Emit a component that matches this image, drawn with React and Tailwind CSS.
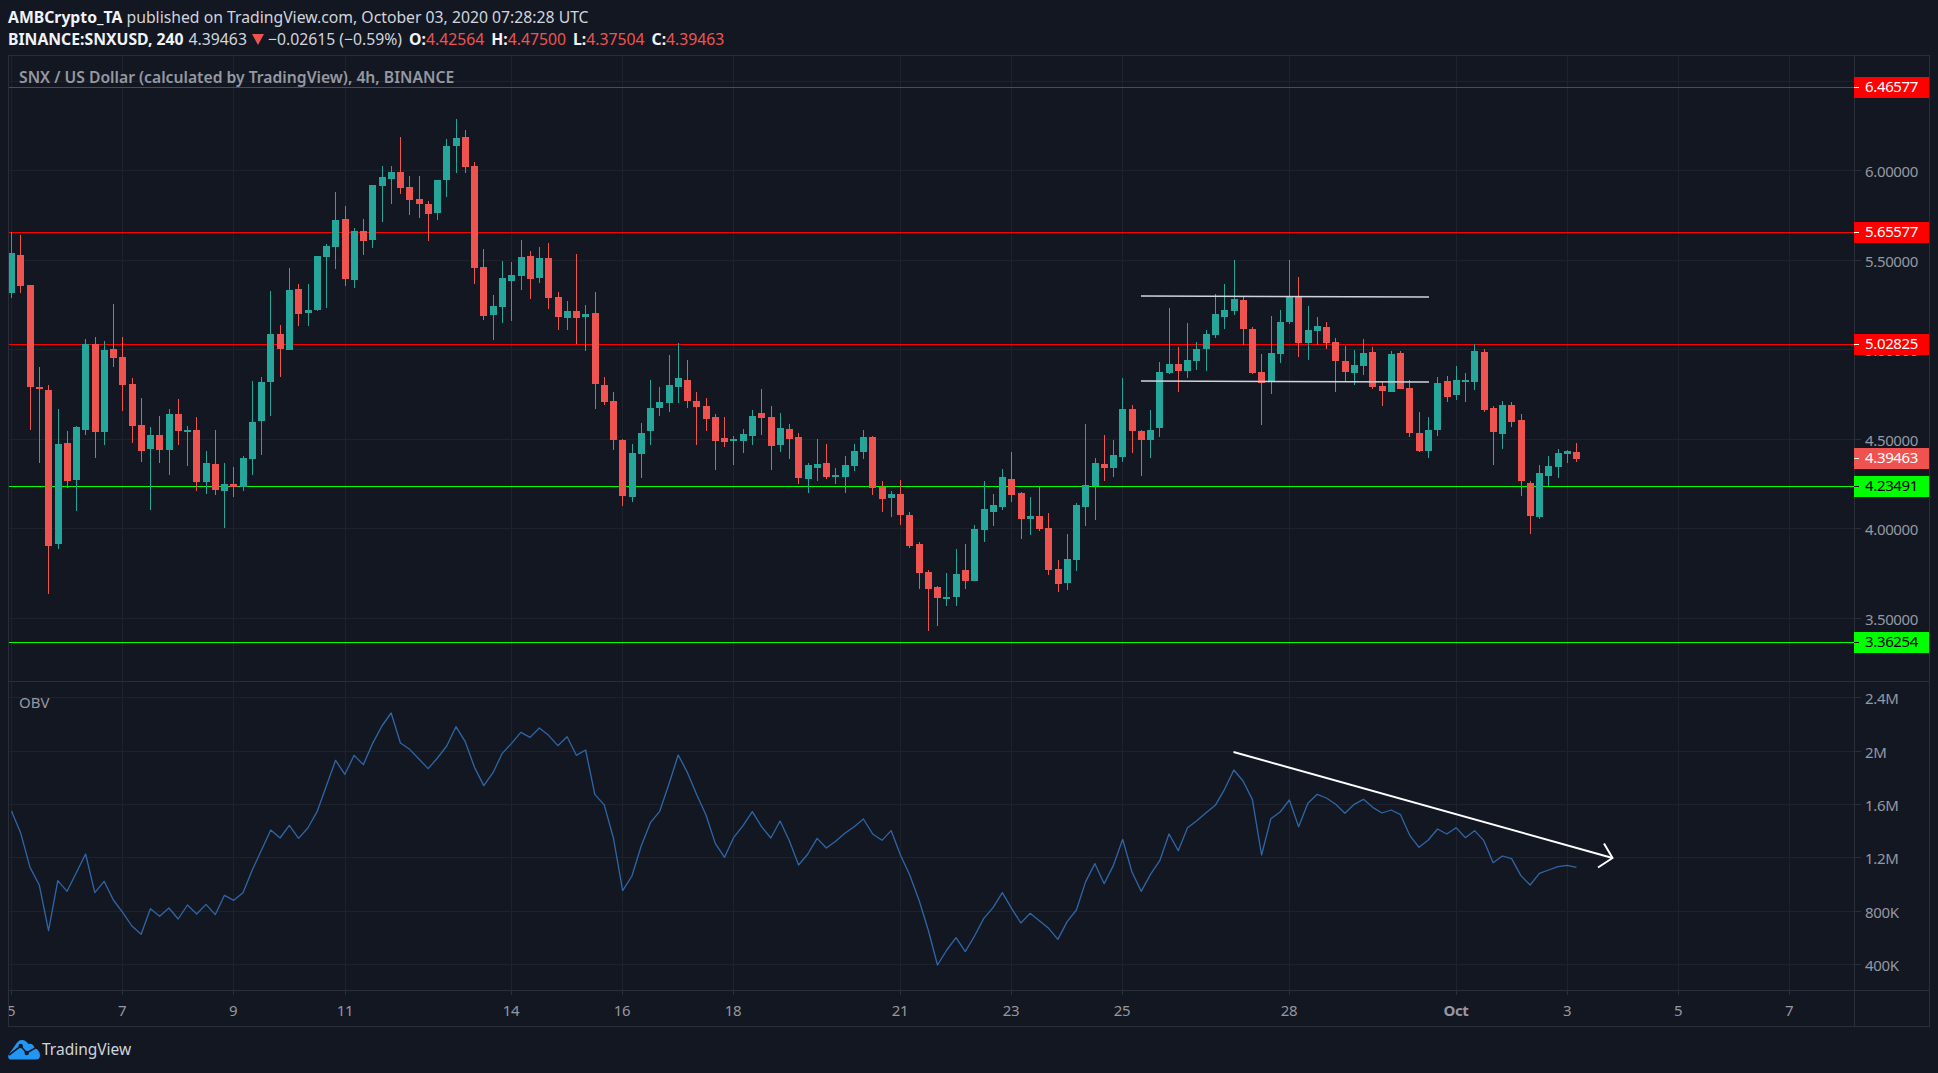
import React from "react";

const C = [
[232,253,293,298,1],[235,255,286,293,0],[285,285,387,430,0],[367,387,389,463,0],[385,390,546,594,0],[409,444,544,549,1],[431,443,481,488,0],[426,427,480,511,1],[339,344,430,435,1],[337,344,432,458,0],
[341,350,432,445,1],[304,349,358,367,0],[337,357,385,411,0],[378,384,426,443,0],[398,425,451,462,0],[427,435,449,510,1],[416,435,450,463,0],[409,414,450,475,1],[399,414,431,445,0],[426,430,432,466,1],
[417,430,482,491,0],[451,463,482,494,1],[430,464,490,495,0],[463,484,491,528,1],[467,484,487,497,0],[456,458,487,491,1],[381,422,459,475,1],[377,382,421,455,1],[291,334,382,416,1],[325,334,349,377,0],
[268,290,350,350,1],[284,289,314,326,0],[284,310,313,326,1],[256,256,310,311,1],[244,246,257,308,1],[192,220,247,269,1],[206,219,279,286,0],[228,231,280,288,1],[219,231,241,255,0],[185,185,240,248,1],
[166,177,186,222,1],[166,172,179,204,1],[137,172,188,194,0],[176,187,200,215,0],[176,199,204,218,0],[201,204,214,241,0],[180,180,213,220,1],[139,146,180,197,1],[119,138,146,173,1],[130,137,167,173,0],
[162,166,268,284,0],[249,267,316,320,0],[295,306,315,340,1],[261,278,307,323,1],[262,275,281,321,1],[240,257,276,290,1],[251,256,279,299,0],[247,258,278,283,1],[243,258,298,309,0],[292,297,317,330,0],
[301,311,318,330,1],[254,311,318,344,0],[305,314,317,351,1],[292,313,384,409,0],[377,385,402,405,0],[392,401,440,450,0],[439,440,496,506,0],[444,453,497,502,1],[423,433,454,478,1],[380,408,431,445,1],
[387,402,408,416,1],[355,385,403,412,1],[343,378,387,403,1],[360,380,401,408,0],[392,401,407,445,0],[398,406,419,431,0],[414,417,441,470,0],[417,438,442,447,0],[436,439,441,465,1],[429,434,441,453,1],
[410,416,436,445,1],[389,413,418,435,0],[406,417,446,470,0],[413,428,445,452,1],[424,429,439,459,0],[433,437,478,484,0],[463,465,479,493,1],[439,464,468,481,1],[444,463,477,479,0],[468,475,477,484,1],
[456,465,477,493,1],[444,451,466,471,1],[430,437,452,459,1],[436,437,488,495,0],[481,487,499,512,0],[491,494,498,517,1],[480,494,515,525,0],[512,515,546,548,0],[542,544,573,589,0],[570,572,589,631,0],
[586,587,598,626,0],[573,597,599,606,1],[549,574,597,606,1],[544,570,581,589,0],[525,529,581,581,1],[481,509,530,542,1],[494,505,512,526,1],[469,477,507,510,1],[452,479,495,502,0],[492,493,519,539,0],
[497,516,519,535,1],[487,516,529,531,0],[513,528,570,575,0],[560,569,584,592,0],[534,559,583,590,1],[503,505,560,571,1],[424,485,507,526,1],[458,463,486,520,1],[435,464,468,481,0],[440,455,468,477,1],
[378,409,457,462,1],[405,409,431,453,0],[430,431,440,476,0],[410,430,440,458,1],[362,372,428,437,1],[308,364,373,374,1],[347,364,371,392,0],[323,360,371,378,1],[342,349,361,370,1],[330,334,349,371,1],
[294,314,335,338,1],[284,310,317,329,1],[260,299,311,315,1],[296,300,329,345,0],[327,329,373,374,0],[354,372,383,425,0],[316,353,382,394,1],[310,322,354,363,1],[260,297,322,324,1],[277,296,343,357,0],
[306,330,343,360,1],[317,326,331,345,1],[322,327,343,349,0],[338,342,361,392,0],[346,361,372,382,0],[350,365,373,385,1],[339,353,366,375,1],[347,352,387,389,0],[381,386,391,406,0],[351,354,392,392,1],
[351,353,389,389,0],[380,388,433,437,0],[412,433,451,452,0],[417,430,451,458,1],[377,383,430,436,1],[376,381,397,402,0],[366,380,395,400,1],[373,380,382,402,1],[344,351,382,390,1],[349,352,410,412,0],
[406,408,432,465,0],[401,405,434,449,1],[402,405,422,427,0],[414,420,481,496,0],[481,483,516,534,0],[465,473,517,519,1],[456,466,476,486,1],[449,453,467,478,1],[450,451,454,463,1],[443,452,459,462,0],
];

const O1 = [393,460,562,615,752,602,634,578,522,638,604,660,697,738,763,686,709,684,717,675,702,673,704,646,661,638,570,510,450,474,436,475,444,395,318,241,283,226,254,190,138,99,189,208,237,266,234,198,140,185,262,317,278,220,190,157,172,144,166,197,170,226,210,344,374,474,632,588,498];
const O2 = [308,274,192,105,158,224,285,370,412,352,317,275,320,354,303,362,435,402,355,384,364,340,320,297,342,361,332,405,465,540,630,735,690,653,695,648,595,563,518,565,609,580,602,625,658,605,570,485,431,491,436,358,456,514,463,422,342,392,323,302,278,256,208,150,183,238,405,296,276,240,320,250,223,234,253,280,253,238,262,279,270,284,346,382,360,327,342,323,353,332,362,428,408,416,467,495,460,450,440,436,442];

const barX = (i) => Math.round(11.2 + 9.26 * i);
const obvPoints = [
  ...O1.map((y, i) => `${11.5 + 9.26 * i},${680 + y / 3}`),
  ...O2.map((y, i) => `${11.5 + 9.26 * (i + 69)},${720 + y / 3}`),
].join(" ");

const TIME = [["5", 0], ["7", 12], ["9", 24], ["11", 36], ["14", 54], ["16", 66], ["18", 78], ["21", 96], ["23", 108], ["25", 120], ["28", 138], ["Oct", 156], ["3", 168], ["5", 180], ["7", 192]];
const PRICE_GRID = [[81, null], [170, "6.00000"], [260, "5.50000"], [349, "5.00000"], [439, "4.50000"], [528, "4.00000"], [618, "3.50000"]];
const OBV_GRID = [[697, "2.4M"], [751, "2M"], [804, "1.6M"], [857, "1.2M"], [911, "800K"], [964, "400K"]];
const LEVELS = [[87, "#ff0000"], [232, "#ff0000"], [344, "#ff0000"], [486, "#00ff00"], [642, "#00ff00"]];
const TAGS = [
  [77, "6.46577", "bg-[#ff0000] text-white", "bg-white"],
  [222, "5.65577", "bg-[#ff0000] text-white", "bg-white"],
  [334, "5.02825", "bg-[#ff0000] text-white", "bg-white"],
  [448, "4.39463", "bg-[#ef5350] text-white", "bg-white"],
  [476, "4.23491", "bg-[#00ff00] text-black", "bg-black"],
  [632, "3.36254", "bg-[#00ff00] text-black", "bg-black"],
];

function VGrid({ y, h }) {
  return TIME.map(([, i], k) => (
    <rect key={k} x={barX(i)} y={y} width="1" height={h} fill="#1e222d" />
  ));
}

function Axis({ grid, top }) {
  return (
    <>
      {grid.map(([y, t]) =>
        t === null ? (
          <div key={y} className="absolute left-0 w-[6px] h-px bg-[#1e222d]" style={{ top: y - top }} />
        ) : (
          <React.Fragment key={y}>
            <div className="absolute left-0 w-[6px] h-px bg-[#2a2e39]" style={{ top: y - top }} />
            <span className="absolute left-[10px] leading-5 text-[15px] tracking-[-0.35px] text-[#9598a1]" style={{ top: y - top - 9 }}>{t}</span>
          </React.Fragment>
        )
      )}
    </>
  );
}

export default function App() {
  return (
    <div className="w-[1938px] h-[1073px] overflow-hidden bg-[#131722] font-['Noto_Sans',sans-serif] flex flex-col">
      <header className="h-[55px] pl-2 pt-[6px] text-[15.75px] leading-[22px] text-[#d1d4dc] whitespace-nowrap">
        <div><b className="font-bold text-[#f0f3fa]">AMBCrypto_TA</b> published on TradingView.com, October 03, 2020 07:28:28 UTC</div>
        <div className="flex items-center">
          <b className="font-bold text-[#f0f3fa]">BINANCE:SNXUSD, 240</b>
          <span className="ml-[5px]">4.39463</span>
          <svg className="ml-[5px] mr-[4px]" width="12" height="11" viewBox="0 0 12 11"><path d="M0 0H12L6 11Z" fill="#ef5350" /></svg>
          <span>−0.02615 (−0.59%)</span>
          {[["O:", "4.42564"], ["H:", "4.47500"], ["L:", "4.37504"], ["C:", "4.39463"]].map(([l, v]) => (
            <span key={l} className="ml-[7px]"><b className="font-bold text-[#f0f3fa]">{l}</b><span className="text-[#ef5350]">{v}</span></span>
          ))}
        </div>
      </header>

      <div className="w-[1922px] h-[972px] ml-2 border border-[#2a2e39] flex flex-col box-border">
        <div className="h-[626px] flex border-b border-[#2a2e39] box-border">
          <div className="relative w-[1845px] h-[625px] overflow-hidden">
            <svg className="block" width="1845" height="625" viewBox="9 56 1845 625">
              <g shapeRendering="crispEdges">
                <VGrid y={56} h={625} />
                {PRICE_GRID.map(([y]) => <rect key={y} x="9" y={y} width="1845" height="1" fill="#1e222d" />)}
                {LEVELS.map(([y, c]) => <rect key={y} x="9" y={y} width="1845" height="1" fill={c} />)}
                {C.map(([hi, t, b, lo, up], i) => {
                  const x = barX(i);
                  const c = up ? "#26a69a" : "#ef5350";
                  return (
                    <g key={i} fill={c}>
                      <rect x={x} y={hi} width="1" height={lo - hi} />
                      <rect x={x - 3} y={t} width="7" height={Math.max(b - t, 1)} />
                    </g>
                  );
                })}
              </g>
              <line x1="1141" y1="296" x2="1429" y2="297" stroke="#d1d4dc" strokeWidth="1.6" />
              <line x1="1141" y1="381" x2="1429" y2="382" stroke="#d1d4dc" strokeWidth="1.6" />
            </svg>
            <span className="absolute left-[10px] top-[11px] leading-5 text-[15.7px] font-semibold text-[#9598a1] whitespace-nowrap">SNX / US Dollar (calculated by TradingView), 4h, BINANCE</span>
          </div>
          <div className="relative w-[75px] border-l border-[#2a2e39] box-border">
            <Axis grid={PRICE_GRID} top={56} />
            {TAGS.map(([y, t, cls, tick]) => (
              <div key={y} className={`absolute -left-px w-[75px] h-[21px] text-[15px] tracking-[-0.35px] leading-5 ${cls}`} style={{ top: y - 56 }}>
                <span className={`absolute left-0 top-[10px] w-[5px] h-px ${tick}`} />
                <span className="absolute left-[11px] -top-px">{t}</span>
              </div>
            ))}
          </div>
        </div>

        <div className="h-[309px] flex border-b border-[#2a2e39] box-border">
          <div className="relative w-[1845px] h-[308px] overflow-hidden">
            <svg className="block" width="1845" height="308" viewBox="9 682 1845 308">
              <g shapeRendering="crispEdges">
                <VGrid y={682} h={308} />
                {OBV_GRID.map(([y]) => <rect key={y} x="9" y={y} width="1845" height="1" fill="#1e222d" />)}
              </g>
              <polyline points={obvPoints} fill="none" stroke="#2f66a6" strokeWidth="1.3" strokeLinejoin="round" />
              <line x1="1233.5" y1="752" x2="1612.5" y2="858" stroke="#ffffff" strokeWidth="2" />
              <polyline points="1604,843.5 1612.5,858 1598,867.5" fill="none" stroke="#ffffff" strokeWidth="2" />
            </svg>
            <span className="absolute left-[10px] top-[10px] leading-5 text-[15px] text-[#9598a1]">OBV</span>
          </div>
          <div className="relative w-[75px] border-l border-[#2a2e39] box-border">
            <Axis grid={OBV_GRID} top={682} />
          </div>
        </div>

        <div className="h-[35px] flex">
          <div className="relative w-[1845px] overflow-hidden">
            {TIME.map(([t, i], k) => (
              <React.Fragment key={k}>
                <span className="absolute top-0 w-px h-1 bg-[#2a2e39]" style={{ left: barX(i) - 9 }} />
                <span className={`absolute top-[9px] -translate-x-1/2 leading-5 text-[15px] tracking-[-0.35px] text-[#9598a1] ${t === "Oct" ? "font-bold" : ""}`} style={{ left: barX(i) - 9 }}>{t}</span>
              </React.Fragment>
            ))}
          </div>
          <div className="w-[75px] border-l border-[#2a2e39] box-border" />
        </div>
      </div>

      <footer className="flex items-center pl-2 h-[46px] -mt-[1px]">
        <svg width="32" height="20" viewBox="0 0 32 20" className="mt-[1px]">
          <path d="M2.5 19.5C0 19.5 -0.5 16 1 14L7 5.5C9 2 11 0 14 0C17 0 19 1.800 20.500 4C23 3 25.500 4.500 26.500 7.500C29.500 9 32 12 32 15.500C32 18.500 30 19.500 28 19.500Z" fill="#2196f3" />
          <polyline points="1,15 12.700,6 18.700,13 29,7" fill="none" stroke="#131722" strokeWidth="1.6" />
          <circle cx="12.700" cy="6" r="2.200" fill="#131722" />
          <circle cx="18.700" cy="13" r="2.200" fill="#131722" />
        </svg>
        <span className="ml-[2px] text-[15.5px] leading-5 text-[#d1d4dc]">TradingView</span>
      </footer>
    </div>
  );
}
